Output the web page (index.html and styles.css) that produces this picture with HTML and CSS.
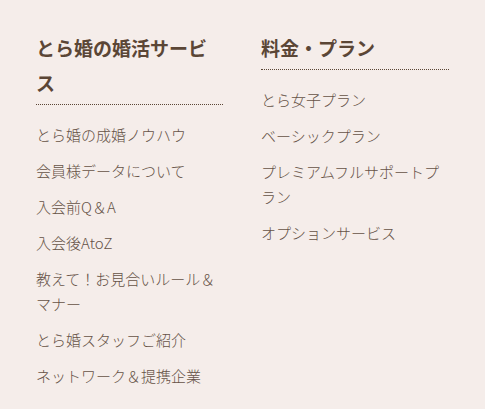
FILE: index.html
```html
<!DOCTYPE html>
<html lang="ja">
<head>
    <meta charset="UTF-8">
    <meta name="viewport" content="width=device-width, initial-scale=1.0">
    <title>とら婚 フッターメニュー</title>
    <link rel="stylesheet" href="styles.css">
</head>
<body>

    <div class="footer-menu">
        <div class="menu-col">
            <h3 class="menu-title">とら婚の婚活サービス</h3>
            <ul class="menu-list">
                <li><a href="#">とら婚の成婚ノウハウ</a></li>
                <li><a href="#">会員様データについて</a></li>
                <li><a href="#">入会前Q＆A</a></li>
                <li><a href="#">入会後AtoZ</a></li>
                <li><a href="#">教えて！お見合いルール＆マナー</a></li>
                <li><a href="#">とら婚スタッフご紹介</a></li>
                <li><a href="#">ネットワーク＆提携企業</a></li>
            </ul>
        </div>
        <div class="menu-col">
            <h3 class="menu-title">料金・プラン</h3>
            <ul class="menu-list">
                <li><a href="#">とら女子プラン</a></li>
                <li><a href="#">ベーシックプラン</a></li>
                <li><a href="#">プレミアムフルサポートプラン</a></li>
                <li><a href="#">オプションサービス</a></li>
            </ul>
        </div>
    </div>

</body>
</html>
```

FILE: styles.css
```css
/* footer menu */
body {
    margin: 0;
    background: #f5edea;
    font-family: "Noto Sans CJK JP", "Noto Sans", sans-serif;
    color: #5e4c40;
}

.footer-menu {
    display: grid;
    grid-template-columns: 187px 188px;
    column-gap: 38px;
    padding: 30px 36px;
}

.menu-title {
    margin: 0 0 17px;
    padding-bottom: 4px;
    font-size: 19px;
    line-height: 35px;
    font-weight: bold;
    color: #5b4636;
    border-bottom: 1px dotted #5b4636;
}

.menu-list {
    list-style: none;
    margin: 0;
    padding: 0;
}

.menu-list li {
    font-size: 15px;
    line-height: 25px;
    margin-bottom: 11px;
    font-weight: 300;
}

.menu-list a {
    color: #655246;
    text-decoration: none;
}
```
